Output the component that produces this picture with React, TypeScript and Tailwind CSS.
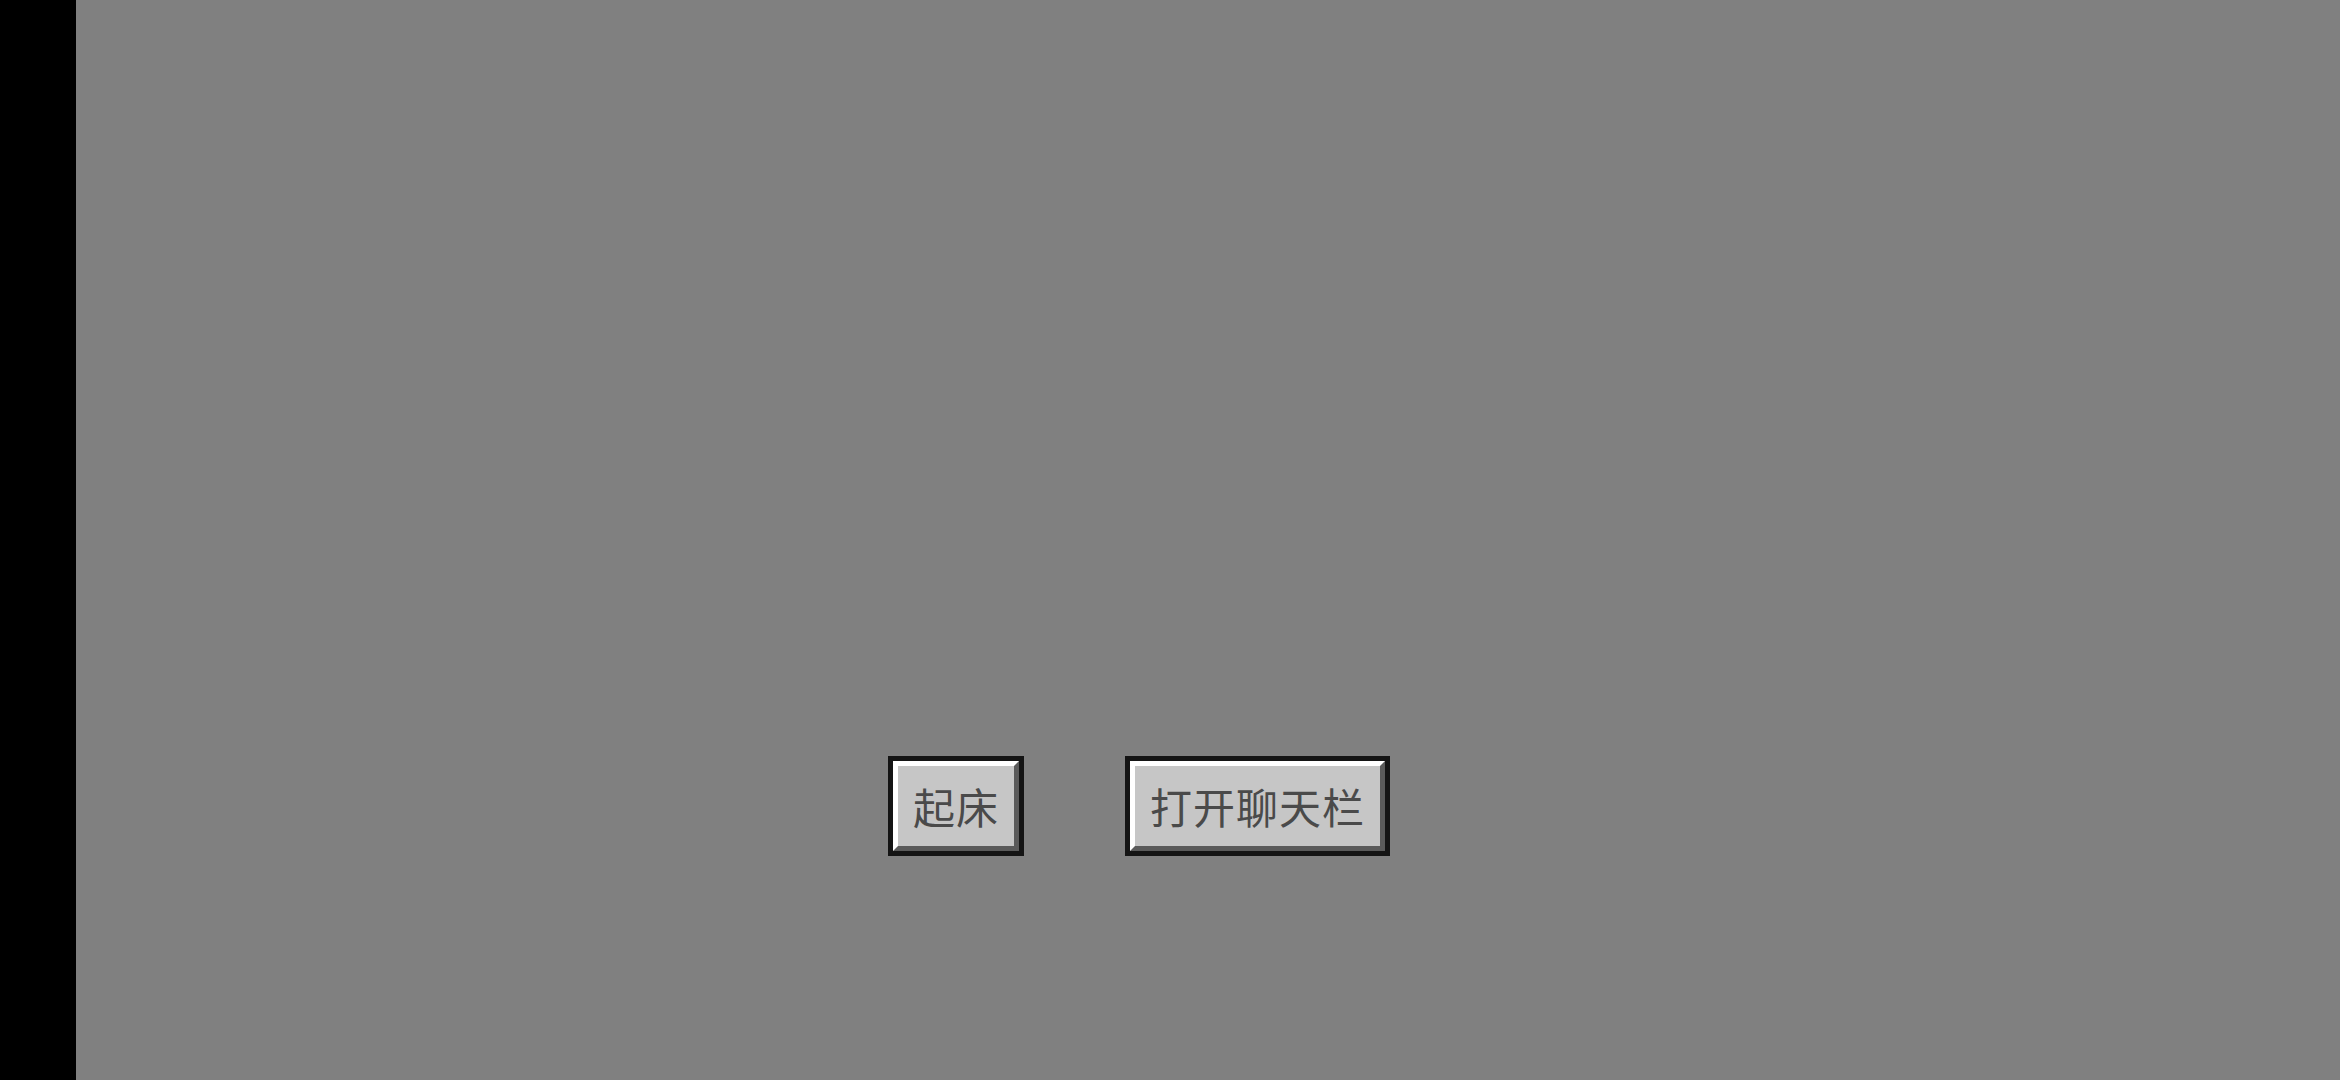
import React from "react";

function McButton({ label, w }: { label: string; w: string }) {
  return (
    <div className={`border-[5px] border-[#141414] h-[100px] flex ${w}`}>
      <div className="flex-1 flex items-center justify-center bg-[#c6c6c6] border-[5px] border-t-white border-l-white border-b-[#5a5a5a] border-r-[#5a5a5a]">
        <span
          className="text-[42px] leading-none text-[#4a4a4a] whitespace-nowrap tracking-[1px]"
          style={{ fontFamily: '"Noto Sans CJK SC", "Noto Sans", sans-serif' }}
        >
          {label}
        </span>
      </div>
    </div>
  );
}

export default function App() {
  return (
    <div className="w-[2340px] h-[1080px] flex bg-[#808080] overflow-hidden">
      <div className="w-[76px] h-full bg-black shrink-0" />
      <div className="flex-1 flex items-start pt-[756px] pl-[812px]">
        <div className="flex gap-[101px]">
          <McButton label="起床" w="w-[136px]" />
          <McButton label="打开聊天栏" w="w-[265px]" />
        </div>
      </div>
    </div>
  );
}
